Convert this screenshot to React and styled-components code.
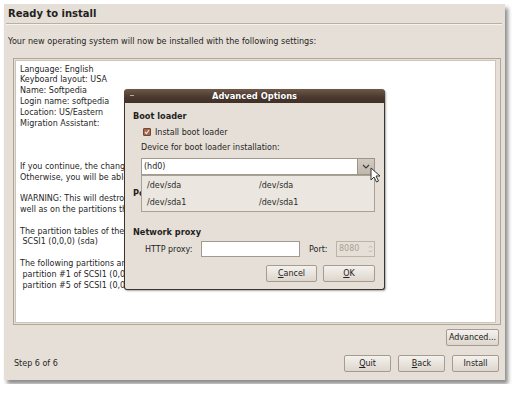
import React from 'react'
import styled, { createGlobalStyle } from 'styled-components'

const GlobalStyle = createGlobalStyle`
  html, body {
    margin: 0;
    background: #fff;
  }
  body {
    font-family: "DejaVu Sans", "Liberation Sans", sans-serif;
    color: #1f1f1f;
  }
`

const Page = styled.div`
  padding: 4px;
`

const Window = styled.div`
  position: relative;
  width: 501px;
  height: 376px;
  box-sizing: border-box;
  padding-bottom: 8px;
  background: #e6dfd7;
  box-shadow: 3px 4px 4px rgba(0, 0, 0, 0.45);
  display: flex;
  flex-direction: column;
`

const Title = styled.div`
  font-size: 10px;
  font-weight: bold;
  line-height: 12px;
  margin: 4px 0 0 4px;
`

const Separator = styled.div`
  border-top: 1px solid #b9b0a4;
  border-bottom: 1px solid #f6f3ef;
  margin: 3px 3px 0 2px;
`

const Description = styled.div`
  font-size: 8.15px;
  line-height: 11px;
  margin: 10.5px 0 0 4px;
`

const Frame = styled.div`
  height: 267px;
  box-sizing: border-box;
  margin: 11.5px 4px 0 9px;
  border: 1px solid #b0a697;
  padding: 1px 4px 1px 1px;
  display: flex;
`

const Summary = styled.div`
  flex: 1;
  background: #fff;
  border: 1px solid #cdc5ba;
  padding: 3.6px 4px;
  font-size: 8px;
  line-height: 10.8px;
  white-space: pre;
  overflow: hidden;
`

const AdvancedRow = styled.div`
  display: flex;
  justify-content: flex-end;
  margin: 4px 6px 0 0;
`

const BottomRow = styled.div`
  margin-top: auto;
  display: flex;
  align-items: center;
  gap: 7px;
  padding: 0 6px 0 10px;
`

const Step = styled.div`
  flex: 1;
  font-size: 8px;
`

const Button = styled.div`
  width: ${p => p.w || 47}px;
  height: 17px;
  box-sizing: border-box;
  border: 1px solid #a59c91;
  border-radius: 2px;
  background: linear-gradient(#f4f1ed, #ddd6cd);
  font-size: 8px;
  line-height: 15px;
  text-align: center;
  color: #222;

  u {
    text-underline-offset: 1px;
  }
`

const Dialog = styled.div`
  position: absolute;
  left: 120px;
  top: 85px;
  width: 261px;
  height: 201px;
  box-sizing: border-box;
  border: 1px solid #3b332e;
  border-top: none;
  border-radius: 4px 4px 3px 3px;
  background: #e6dfd7;
  box-shadow: 1px 1px 2px rgba(0, 0, 0, 0.35);
`

const TitleBar = styled.div`
  position: relative;
  height: 14px;
  margin: 0 -1px;
  border-radius: 4px 4px 0 0;
  background: linear-gradient(#6e5849, #4a382e 60%, #3f3028);
  color: #fff;
  font-size: 8.3px;
  font-weight: bold;
  line-height: 14px;
  text-align: center;
  text-shadow: 0 0 1px rgba(0, 0, 0, 0.6);
`

const MenuDot = styled.span`
  position: absolute;
  left: 6px;
  top: 6px;
  width: 4px;
  height: 1px;
  background: #b9aa9e;
`

const Body = styled.div`
  padding: 5px 9px 0 8px;
  display: flex;
  flex-direction: column;
`

const Section = styled.div`
  font-size: 8.2px;
  font-weight: bold;
  line-height: 16px;
  height: 16px;
  margin-top: ${p => p.top || 0}px;
`

const CheckRow = styled.div`
  display: flex;
  align-items: center;
  gap: 4px;
  height: 16px;
  margin-left: 10px;
  font-size: 8px;
`

const Check = styled.span`
  width: 8px;
  height: 8px;
  box-sizing: border-box;
  border: 1px solid #6e4a38;
  border-radius: 1px;
  background: #a5684b;
  display: flex;
  align-items: center;
  justify-content: center;
`

const FieldLabel = styled.div`
  font-size: 8px;
  line-height: 16px;
  height: 16px;
  margin-left: 8px;
`

const Combo = styled.div`
  height: 17px;
  margin: 2px 0 0 8px;
  display: flex;
`

const ComboEntry = styled.div`
  flex: 1;
  box-sizing: border-box;
  border: 1px solid #a39a8f;
  border-right: none;
  background: #fff;
  font-size: 8px;
  line-height: 15px;
  padding-left: 2px;
`

const ComboButton = styled.div`
  width: 18px;
  box-sizing: border-box;
  border: 1px solid #9d9489;
  background: linear-gradient(#d3cbc1, #bfb6ab);
  display: flex;
  align-items: center;
  justify-content: center;
`

const Popup = styled.div`
  position: absolute;
  left: 16px;
  top: 86px;
  width: 234px;
  height: 37px;
  box-sizing: border-box;
  border: 1px solid #aaa196;
  background: #ebe6e0;
  padding-top: 1px;
  display: grid;
  grid-template-columns: 112px 1fr;
  grid-auto-rows: 17px;
  font-size: 8px;
  align-items: center;
`

const PopupCell = styled.div`
  padding-left: 5px;
  color: #2a2a2a;
`

const ProxyRow = styled.div`
  display: flex;
  align-items: center;
  height: 16px;
  margin: 1px 0 0 12px;
  font-size: 8px;
`

const ProxyLabel = styled.span`
  width: ${p => p.w}px;
  margin-left: ${p => p.ml || 0}px;
`

const Input = styled.div`
  width: ${p => p.w}px;
  height: 16px;
  box-sizing: border-box;
  border: 1px solid ${p => (p.disabled ? '#bdb4a9' : '#a39a8f')};
  background: ${p => (p.disabled ? '#e6dfd7' : '#fff')};
  color: #a8a096;
  font-size: 8px;
  line-height: 14px;
  padding-left: 2px;
  display: flex;
  justify-content: space-between;
`

const Spin = styled.span`
  width: 8px;
  display: flex;
  align-items: center;
  justify-content: center;
`

const ButtonRow = styled.div`
  display: flex;
  justify-content: flex-end;
  gap: 6px;
  margin-top: 8px;
`

const Cursor = styled.svg`
  position: absolute;
  left: 245px;
  top: 78px;
`

const summary = [
  'Language: English',
  'Keyboard layout: USA',
  'Name: Softpedia',
  'Login name: softpedia',
  'Location: US/Eastern',
  'Migration Assistant:',
  '',
  '',
  '',
  'If you continue, the changes listed below will be written to the disks.',
  'Otherwise, you will be able to make further changes manually.',
  '',
  'WARNING: This will destroy all data on any partitions you have removed as',
  'well as on the partitions that are going to be formatted.',
  '',
  'The partition tables of the following devices are changed:',
  ' SCSI1 (0,0,0) (sda)',
  '',
  'The following partitions are going to be formatted:',
  ' partition #1 of SCSI1 (0,0,0) (sda) as ext3',
  ' partition #5 of SCSI1 (0,0,0) (sda) as swap',
].join('\n')

const AdvancedOptions = () => (
  <Dialog>
    <TitleBar>
      <MenuDot />
      Advanced Options
    </TitleBar>
    <Body>
      <Section>Boot loader</Section>
      <CheckRow>
        <Check>
          <svg width="6" height="6" viewBox="0 0 6 6">
            <path d="M1 3 L2.5 4.6 L5 1" fill="none" stroke="#f3e6dc" strokeWidth="1.1" />
          </svg>
        </Check>
        Install boot loader
      </CheckRow>
      <FieldLabel>Device for boot loader installation:</FieldLabel>
      <Combo>
        <ComboEntry>(hd0)</ComboEntry>
        <ComboButton>
          <svg width="8" height="5" viewBox="0 0 8 5">
            <path d="M1 1 L4 4 L7 1" fill="none" stroke="#3a3a3a" strokeWidth="1.1" />
          </svg>
        </ComboButton>
      </Combo>
      <Section top={10}>Popularity contest</Section>
      <Section top={23}>Network proxy</Section>
      <ProxyRow>
        <ProxyLabel w={56}>HTTP proxy:</ProxyLabel>
        <Input w={99} />
        <ProxyLabel w={27} ml={9}>Port:</ProxyLabel>
        <Input w={39} disabled>
          8080
          <Spin>
            <svg width="5" height="10" viewBox="0 0 5 10">
              <path d="M1 3.5 L2.5 2 L4 3.5 M1 6.5 L2.5 8 L4 6.5" fill="none" stroke="#b5aca2" strokeWidth="0.9" />
            </svg>
          </Spin>
        </Input>
      </ProxyRow>
      <ButtonRow>
        <Button w={51}><u>C</u>ancel</Button>
        <Button w={52}><u>O</u>K</Button>
      </ButtonRow>
    </Body>
    <Popup>
      <PopupCell>/dev/sda</PopupCell>
      <PopupCell>/dev/sda</PopupCell>
      <PopupCell>/dev/sda1</PopupCell>
      <PopupCell>/dev/sda1</PopupCell>
    </Popup>
    <Cursor width="11" height="16" viewBox="0 0 11 16">
      <path d="M1 1 L1 13 L4 10 L6.5 15 L8.5 14 L6 9 L10 9 Z" fill="#fff" stroke="#333" strokeWidth="1" strokeLinejoin="round" />
    </Cursor>
  </Dialog>
)

const App = () => (
  <Page>
    <GlobalStyle />
    <Window>
      <Title>Ready to install</Title>
      <Separator />
      <Description>
        Your new operating system will now be installed with the following settings:
      </Description>
      <Frame>
        <Summary>{summary}</Summary>
      </Frame>
      <AdvancedRow>
        <Button w={53}>Advanced...</Button>
      </AdvancedRow>
      <BottomRow>
        <Step>Step 6 of 6</Step>
        <Button><u>Q</u>uit</Button>
        <Button><u>B</u>ack</Button>
        <Button>Install</Button>
      </BottomRow>
      <AdvancedOptions />
    </Window>
  </Page>
)

export default App
